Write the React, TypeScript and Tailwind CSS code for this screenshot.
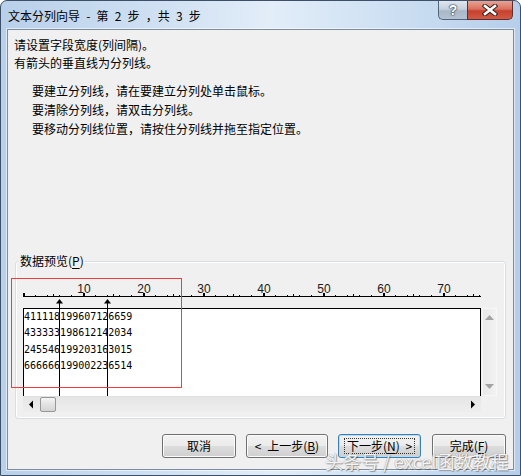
import React from "react";

const cjk = "font-['Noto_Sans_CJK_SC','Noto_Sans',sans-serif]";

function Ruler() {
  const ticks: React.ReactNode[] = [];
  for (let i = 0; i <= 76; i++) {
    const x = i * 6;
    if (i % 10 === 0) ticks.push(<rect key={i} x={x} y={15} width={2} height={4} fill="#000" />);
    else if (i % 5 === 0) ticks.push(<rect key={i} x={x} y={16} width={1} height={3} fill="#000" />);
    else if (i % 2 === 0) ticks.push(<rect key={i} x={x} y={17} width={1} height={2} fill="#000" />);
  }
  const nums = [10, 20, 30, 40, 50, 60, 70];
  return (
    <svg width={458} height={30} className="block">
      <rect x={0} y={18} width={458} height={1} fill="#000" />
      {ticks}
      {nums.map((n) => (
        <text
          key={n}
          x={n * 6 + 1}
          y={14.7}
          textAnchor="middle"
          fontSize={12}
          fontFamily="'Liberation Sans', Arial, sans-serif"
          fill="#1a1a1a"
        >
          {n}
        </text>
      ))}
    </svg>
  );
}

function ColLine({ left }: { left: string }) {
  return (
    <svg width={7} height={97} className={`absolute top-[37px] ${left}`}>
      <polygon points="3.5,0 0,4.5 7,4.5" fill="#000" />
      <rect x={3} y={4} width={1} height={93} fill="#000" />
    </svg>
  );
}

function WinButton({
  w,
  children,
  focused,
  className = "",
}: {
  w: string;
  children: React.ReactNode;
  focused?: boolean;
  className?: string;
}) {
  return (
    <div
      className={`${w} ${className} h-[24px] rounded-[3px] border flex items-center justify-center text-[12px] text-black [word-spacing:3px] ${
        focused
          ? "border-[#3c7fb1] shadow-[inset_0_0_0_1px_#b5dcf7] bg-[linear-gradient(to_bottom,#f2f2f2_0%,#ebebeb_50%,#dddddd_50%,#cfcfcf_100%)]"
          : "border-[#707070] shadow-[inset_0_0_0_1px_#fbfbfb] bg-[linear-gradient(to_bottom,#f2f2f2_0%,#ebebeb_50%,#dddddd_50%,#cfcfcf_100%)]"
      }`}
    >
      {focused ? (
        <div className="h-[16px] px-[2px] flex items-center border border-dotted border-[#333]">{children}</div>
      ) : (
        children
      )}
    </div>
  );
}

export default function App() {
  const rows = ["411118199607126659", "433333198612142034", "245546199203163015", "666666199002236514"];
  return (
    <div
      className={`relative w-[521px] h-[476px] overflow-hidden rounded-t-[7px] border border-[#3d5068] bg-[linear-gradient(90deg,#b9d0ea_0%,#cfe0f2_30%,#e2edf8_52%,#d2e3f4_70%,#b6cee9_100%)] ${cjk}`}
    >
      {/* title bar */}
      <div className="h-[28px] flex items-start">
        <div className="mt-[6px] ml-[7px] text-[12px] leading-[18px] text-black [word-spacing:3.5px] whitespace-pre">文本分列向导 - 第 2 步 ，共 3 步</div>
        <div className="ml-auto mr-[7px] flex">
          <div className="w-[29px] h-[19px] rounded-bl-[5px] border border-t-0 border-r-0 border-[#52647a] bg-[linear-gradient(to_bottom,#dfe6ee_0%,#c6d1dd_45%,#a9b8c8_55%,#b4c2d1_100%)] flex items-center justify-center">
            <span className="text-[14px] leading-none font-bold text-white font-['Liberation_Sans',sans-serif] [text-shadow:0_0_1px_#2c3b4d,0_0_1px_#2c3b4d,0_0_2px_#2c3b4d]">
              ?
            </span>
          </div>
          <div className="w-[46px] h-[19px] rounded-br-[5px] border border-t-0 border-[#5a3030] bg-[linear-gradient(to_bottom,#e8a393_0%,#d9705f_45%,#c7402e_55%,#d25a44_100%)] flex items-center justify-center">
            <svg width={16} height={12} viewBox="0 0 16 12">
              <path d="M3 2 L13 10 M13 2 L3 10" stroke="#3a2020" strokeWidth={4.6} strokeLinecap="square" />
              <path d="M3 2 L13 10 M13 2 L3 10" stroke="#ffffff" strokeWidth={2.6} strokeLinecap="square" />
            </svg>
          </div>
        </div>
      </div>

      {/* client area */}
      <div className="ml-[6px] w-[507px] h-[441px] border border-[#7d8ca0] bg-[#f0f0f0] shadow-[0_0_0_1px_rgba(255,255,255,0.55)] flex flex-col">
        <div className="h-[231px] pl-[6px] pt-[6px] text-[12px] text-black">
          <div className="leading-[18px]">请设置字段宽度(列间隔)。</div>
          <div className="leading-[18px]">有箭头的垂直线为分列线。</div>
          <div className="mt-[10px] pl-[18px] leading-[18.8px]">
            <div>要建立分列线，请在要建立分列处单击鼠标。</div>
            <div>要清除分列线，请双击分列线。</div>
            <div>要移动分列线位置，请按住分列线并拖至指定位置。</div>
          </div>
        </div>

        {/* group box */}
        <div className="relative ml-[7px] w-[491px] h-[158px] rounded-[3px] border border-[#d5dfe5] shadow-[inset_0_0_0_1px_#ffffff] pl-[7px] pt-[16px]">
          <div className="absolute left-[3px] top-[-10px] px-[1px] bg-[#f0f0f0] text-[12px] leading-[18px] text-black">
            数据预览(<span className="underline underline-offset-2">P</span>)
          </div>
          <Ruler />
          <div className="flex">
            <div className="w-[458px]">
              <div className="h-[88px] bg-white border-l border-t border-r border-black pt-[0px] font-['DejaVu_Sans_Mono',monospace] text-[10px] leading-[16.3px] text-black whitespace-pre">
                {rows.map((r) => (
                  <div key={r}>{r}</div>
                ))}
              </div>
              <div className="h-[16px] bg-[linear-gradient(to_bottom,#e6e6e6,#eeeeee)] border-t border-[#e0e0e0] flex items-center">
                <svg width={16} height={15} className="ml-[0px]">
                  <polygon points="6,7.5 10,3.5 10,11.5" fill="#000" />
                </svg>
                <div className="ml-[1px] w-[16px] h-[15px] rounded-[2px] border border-[#979797] bg-[linear-gradient(to_bottom,#f5f5f5,#e2e2e2_50%,#d4d4d4)]" />
                <svg width={16} height={15} className="ml-auto">
                  <polygon points="10,7.5 6,3.5 6,11.5" fill="#000" />
                </svg>
              </div>
            </div>
            <div className="w-[16px]">
              <div className="h-[88px] ml-[1px] bg-[linear-gradient(to_right,#e9e9e9,#f2f2f2)] border border-[#f7f7f7] flex flex-col items-center justify-between py-[6px]">
                <svg width={9} height={5}>
                  <polygon points="4.5,0 0,5 9,5" fill="#a3a3a3" />
                </svg>
                <svg width={9} height={5}>
                  <polygon points="0,0 9,0 4.5,5" fill="#a3a3a3" />
                </svg>
              </div>
              <div className="h-[16px]" />
            </div>
          </div>
          <ColLine left="left-[40px]" />
          <ColLine left="left-[88px]" />
        </div>

        {/* buttons */}
        <div className="mt-[15px] flex pl-[154px]">
          <WinButton w="w-[74px]">取消</WinButton>
          <WinButton w="w-[82px]" className="ml-[10px]">
            &lt; 上一步(<span className="underline underline-offset-2">B</span>)
          </WinButton>
          <WinButton w="w-[83px]" className="ml-[10px]" focused>
            下一步(<span className="underline underline-offset-2">N</span>) &gt;
          </WinButton>
          <WinButton w="w-[74px]" className="ml-[11px]">
            完成(<span className="underline underline-offset-2">F</span>)
          </WinButton>
        </div>
      </div>

      {/* red highlight */}
      <div className="absolute left-[10px] top-[277px] w-[171px] h-[110px] border-[1.5px] border-[#f23c3c]" />

      {/* watermark */}
      <div className="absolute left-[324px] top-[448px] text-[18px] leading-[24px] text-white/90 whitespace-nowrap [text-shadow:0_0_1px_#7a7a7a,1px_1px_1px_rgba(0,0,0,0.35)]">
        头条号 / excel函数教程
      </div>
    </div>
  );
}
